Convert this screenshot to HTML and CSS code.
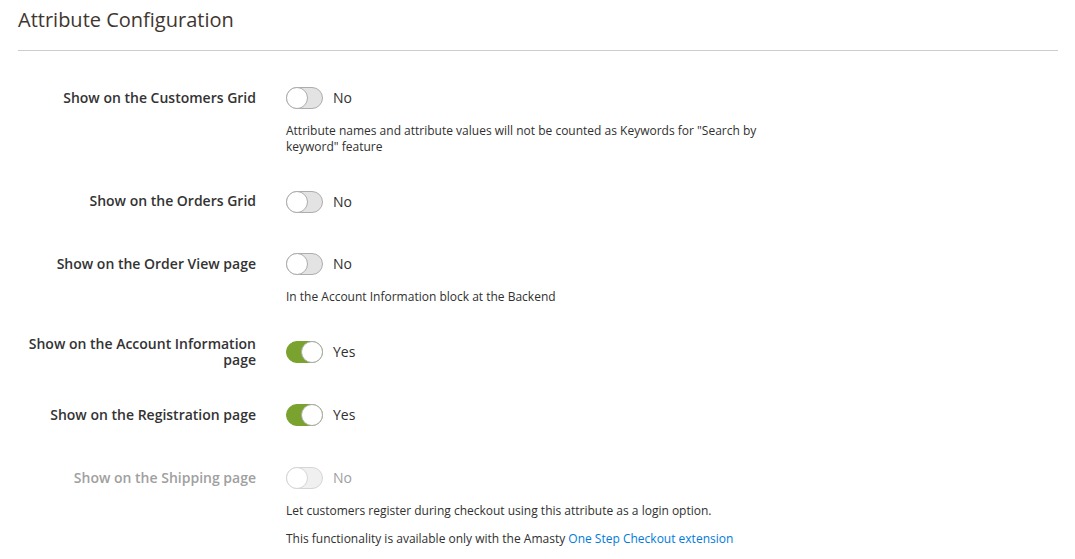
FILE: index.html
```html
<!DOCTYPE html>
<html>
<head>
<meta charset="utf-8">
<link rel="stylesheet" href="styles.css">
</head>
<body>
<div class="section">
  <h2 class="title">Attribute Configuration</h2>
  <div class="fields">
    <div class="field">
      <div class="label">Show on the Customers Grid</div>
      <div class="control">
        <div class="switch-line"><span class="switch"></span><span class="value">No</span></div>
        <div class="note">Attribute names and attribute values will not be counted as Keywords for "Search by keyword" feature</div>
      </div>
    </div>
    <div class="field">
      <div class="label">Show on the Orders Grid</div>
      <div class="control">
        <div class="switch-line"><span class="switch"></span><span class="value">No</span></div>
      </div>
    </div>
    <div class="field">
      <div class="label">Show on the Order View page</div>
      <div class="control">
        <div class="switch-line"><span class="switch"></span><span class="value">No</span></div>
        <div class="note">In the Account Information block at the Backend</div>
      </div>
    </div>
    <div class="field">
      <div class="label">Show on the Account Information page</div>
      <div class="control">
        <div class="switch-line"><span class="switch on"></span><span class="value">Yes</span></div>
      </div>
    </div>
    <div class="field">
      <div class="label">Show on the Registration page</div>
      <div class="control">
        <div class="switch-line"><span class="switch on"></span><span class="value">Yes</span></div>
      </div>
    </div>
    <div class="field disabled">
      <div class="label">Show on the Shipping page</div>
      <div class="control">
        <div class="switch-line"><span class="switch"></span><span class="value">No</span></div>
        <div class="note">Let customers register during checkout using this attribute as a login option.</div>
        <div class="note note-extra">This functionality is available only with the Amasty <a class="link" href="#">One Step Checkout extension</a></div>
      </div>
    </div>
  </div>
</div>
</body>
</html>
```

FILE: styles.css
```css
html, body {
  margin: 0;
  padding: 0;
  background: #ffffff;
}
body {
  font-family: "Open Sans", "Liberation Sans", sans-serif;
  color: #303030;
}
.section {
  width: 1040px;
  margin-left: 18px;
}
.title {
  margin: 0;
  padding-top: 6px;
  font-size: 20px;
  font-weight: 400;
  line-height: 28px;
  color: #41362f;
  height: 44px;
  border-bottom: 1px solid #cccccc;
}
.fields {
  padding-top: 31px;
}
.field {
  display: flex;
  align-items: flex-start;
  margin-bottom: 30.6px;
}
.label {
  width: 238px;
  flex: none;
  text-align: right;
  font-size: 14px;
  font-weight: 600;
  line-height: 16.5px;
  min-height: 32px;
  display: flex;
  align-items: center;
  justify-content: flex-end;
  color: #333333;
}
.control {
  margin-left: 30px;
  width: 480px;
}
.switch-line {
  height: 32px;
  display: flex;
  align-items: center;
}
.switch {
  position: relative;
  box-sizing: border-box;
  width: 37px;
  height: 22px;
  border-radius: 12px;
  background: #e3e3e3;
  border: 1px solid #adadad;
  display: inline-block;
}
.switch::before {
  content: "";
  position: absolute;
  box-sizing: border-box;
  left: -1px;
  top: -1px;
  width: 22px;
  height: 22px;
  border-radius: 50%;
  background: #ffffff;
  border: 1px solid #adadad;
}
.switch.on {
  background: #79a22e;
  border-color: #79a22e;
}
.switch.on::before {
  left: auto;
  right: -1px;
}
.value {
  margin-left: 10px;
  font-size: 14px;
  line-height: 18px;
}
.note {
  font-size: 12px;
  line-height: 16px;
  margin-top: 9px;
  color: #303030;
}
.note-extra {
  margin-top: 12px;
}
.link {
  color: #007bdb;
  text-decoration: none;
}
.disabled .label {
  color: #a0a0a0;
}
.disabled .switch {
  opacity: 0.5;
}
.disabled .value {
  color: #a0a0a0;
}
```
